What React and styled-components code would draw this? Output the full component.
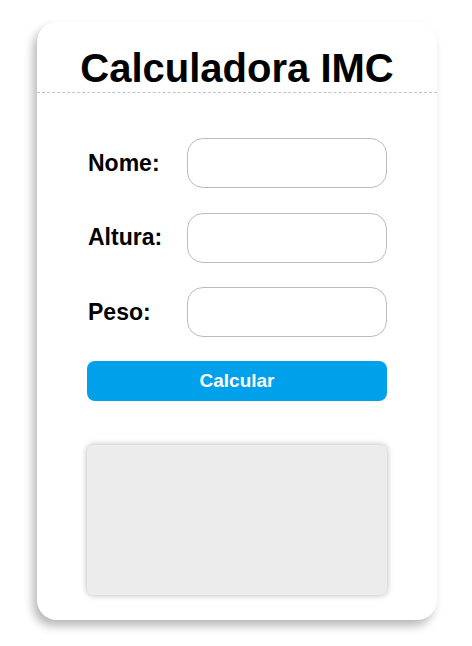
import React from "react";
import styled, { createGlobalStyle } from "styled-components";

const GlobalStyle = createGlobalStyle`
  body {
    margin: 0;
    background: #fff;
    font-family: Arial, "Liberation Sans", sans-serif;
  }
`;

const Page = styled.div`
  display: flex;
  justify-content: center;
  min-height: 100vh;
  box-sizing: border-box;
  padding: 22px 0 25px 2px;
`;

const Card = styled.div`
  width: 400px;
  align-self: flex-start;
  background: #fff;
  border-radius: 20px;
  box-shadow: -4px 6px 10px rgba(0, 0, 0, 0.28);
`;

const Header = styled.div`
  padding: 24px 0 1px;
  border-bottom: 1px dashed #c4c4c4;
`;

const Title = styled.h1`
  margin: 0;
  font-size: 40px;
  font-weight: bold;
  text-align: center;
  color: #000;
`;

const Form = styled.div`
  display: flex;
  flex-direction: column;
  padding: 45px 50px 25px;
`;

const Fields = styled.div`
  display: flex;
  flex-direction: column;
  gap: 24.5px;
`;

const Row = styled.div`
  display: flex;
  align-items: center;
`;

const Label = styled.label`
  width: 100px;
  padding-left: 1px;
  box-sizing: border-box;
  font-size: 23px;
  font-weight: bold;
  color: #000;
`;

const Input = styled.input`
  width: 200px;
  height: 50px;
  box-sizing: border-box;
  border: 1px solid #bcbcbc;
  border-radius: 16px;
  background: #fff;
  outline: none;
  padding: 0 12px;
  font-size: 16px;
`;

const Button = styled.button`
  margin-top: 24px;
  height: 40px;
  border: none;
  border-radius: 8px;
  background: #00a0ea;
  color: #fff;
  font-family: Arial, "Liberation Sans", sans-serif;
  font-size: 19px;
  font-weight: bold;
  cursor: pointer;
`;

const Result = styled.div`
  margin-top: 44px;
  height: 150px;
  background: #ececec;
  border-radius: 6px;
  box-shadow: 0 0 6px rgba(0, 0, 0, 0.3);
`;

const fields = [
  { id: "nome", label: "Nome:" },
  { id: "altura", label: "Altura:" },
  { id: "peso", label: "Peso:" }
];

export default function App() {
  return (
    <Page>
      <GlobalStyle />
      <Card>
        <Header>
          <Title>Calculadora IMC</Title>
        </Header>
        <Form>
          <Fields>
            {fields.map(f => (
              <Row key={f.id}>
                <Label htmlFor={f.id}>{f.label}</Label>
                <Input id={f.id} type="text" />
              </Row>
            ))}
          </Fields>
          <Button>Calcular</Button>
          <Result />
        </Form>
      </Card>
    </Page>
  );
}
